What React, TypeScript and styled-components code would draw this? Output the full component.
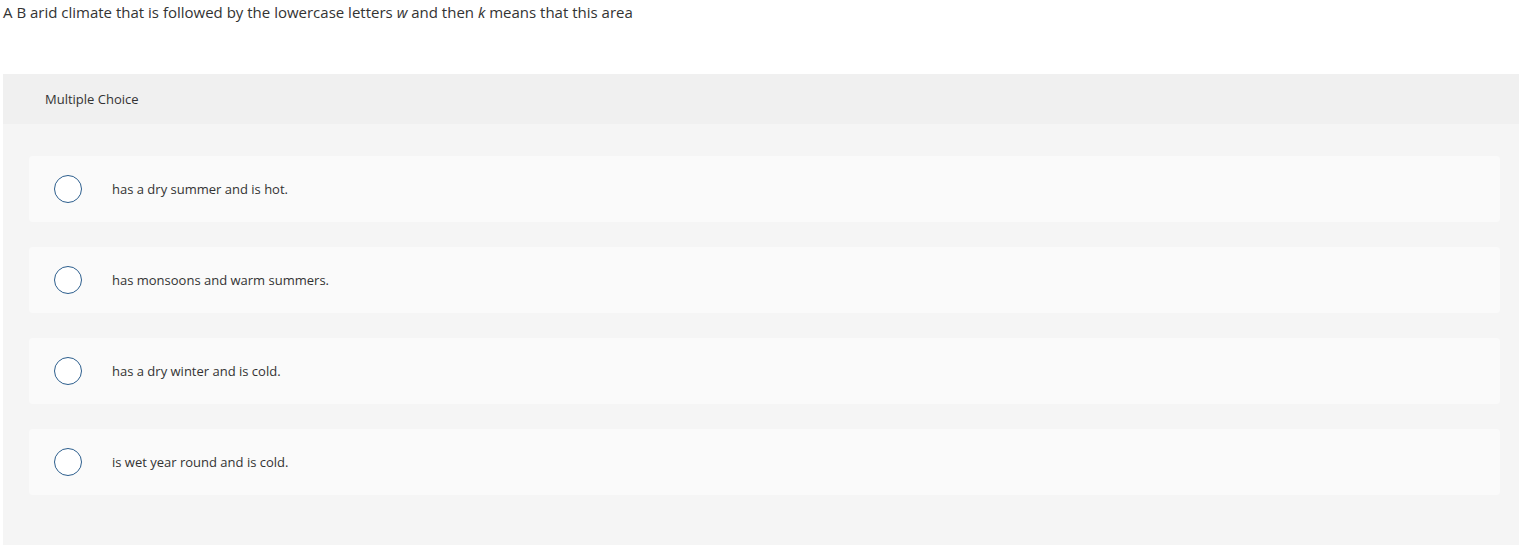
import React from "react";
import styled, { createGlobalStyle } from "styled-components";

const GlobalStyle = createGlobalStyle`
  body {
    margin: 0;
    background: #fff;
    font-family: "Open Sans", "Liberation Sans", sans-serif;
    color: #333;
  }
`;

const Page = styled.div`
  padding-left: 3px;
`;

const Question = styled.p`
  margin: 0;
  padding-top: 3px;
  height: 71px;
  font-size: 15px;
  line-height: 18px;
  color: #333;
  em {
    font-style: italic;
  }
`;

const Panel = styled.section`
  background: #f5f5f5;
  min-height: 480px;
`;

const PanelHeader = styled.div`
  height: 50px;
  display: flex;
  align-items: center;
  padding-left: 42px;
  background: #f0f0f0;
  font-size: 13px;
  color: #333;
`;

const Options = styled.div`
  display: flex;
  flex-direction: column;
  gap: 25px;
  padding: 32px 19px 50px 26px;
`;

const Option = styled.label`
  display: flex;
  align-items: center;
  height: 66px;
  padding-left: 25px;
  background: #fafafa;
  border-radius: 4px;
  cursor: pointer;
`;

const Radio = styled.span`
  width: 28px;
  height: 28px;
  box-sizing: border-box;
  border: 1.5px solid #2c5e8d;
  border-radius: 50%;
  background: #fff;
  flex-shrink: 0;
`;

const OptionText = styled.span`
  margin-left: 30px;
  font-size: 13px;
  color: #333;
`;

const choices = [
  "has a dry summer and is hot.",
  "has monsoons and warm summers.",
  "has a dry winter and is cold.",
  "is wet year round and is cold.",
];

export default function App() {
  return (
    <Page>
      <GlobalStyle />
      <Question>
        A B arid climate that is followed by the lowercase letters <em>w</em> and
        then <em>k</em> means that this area
      </Question>
      <Panel>
        <PanelHeader>Multiple Choice</PanelHeader>
        <Options>
          {choices.map((c) => (
            <Option key={c}>
              <Radio />
              <OptionText>{c}</OptionText>
            </Option>
          ))}
        </Options>
      </Panel>
    </Page>
  );
}
